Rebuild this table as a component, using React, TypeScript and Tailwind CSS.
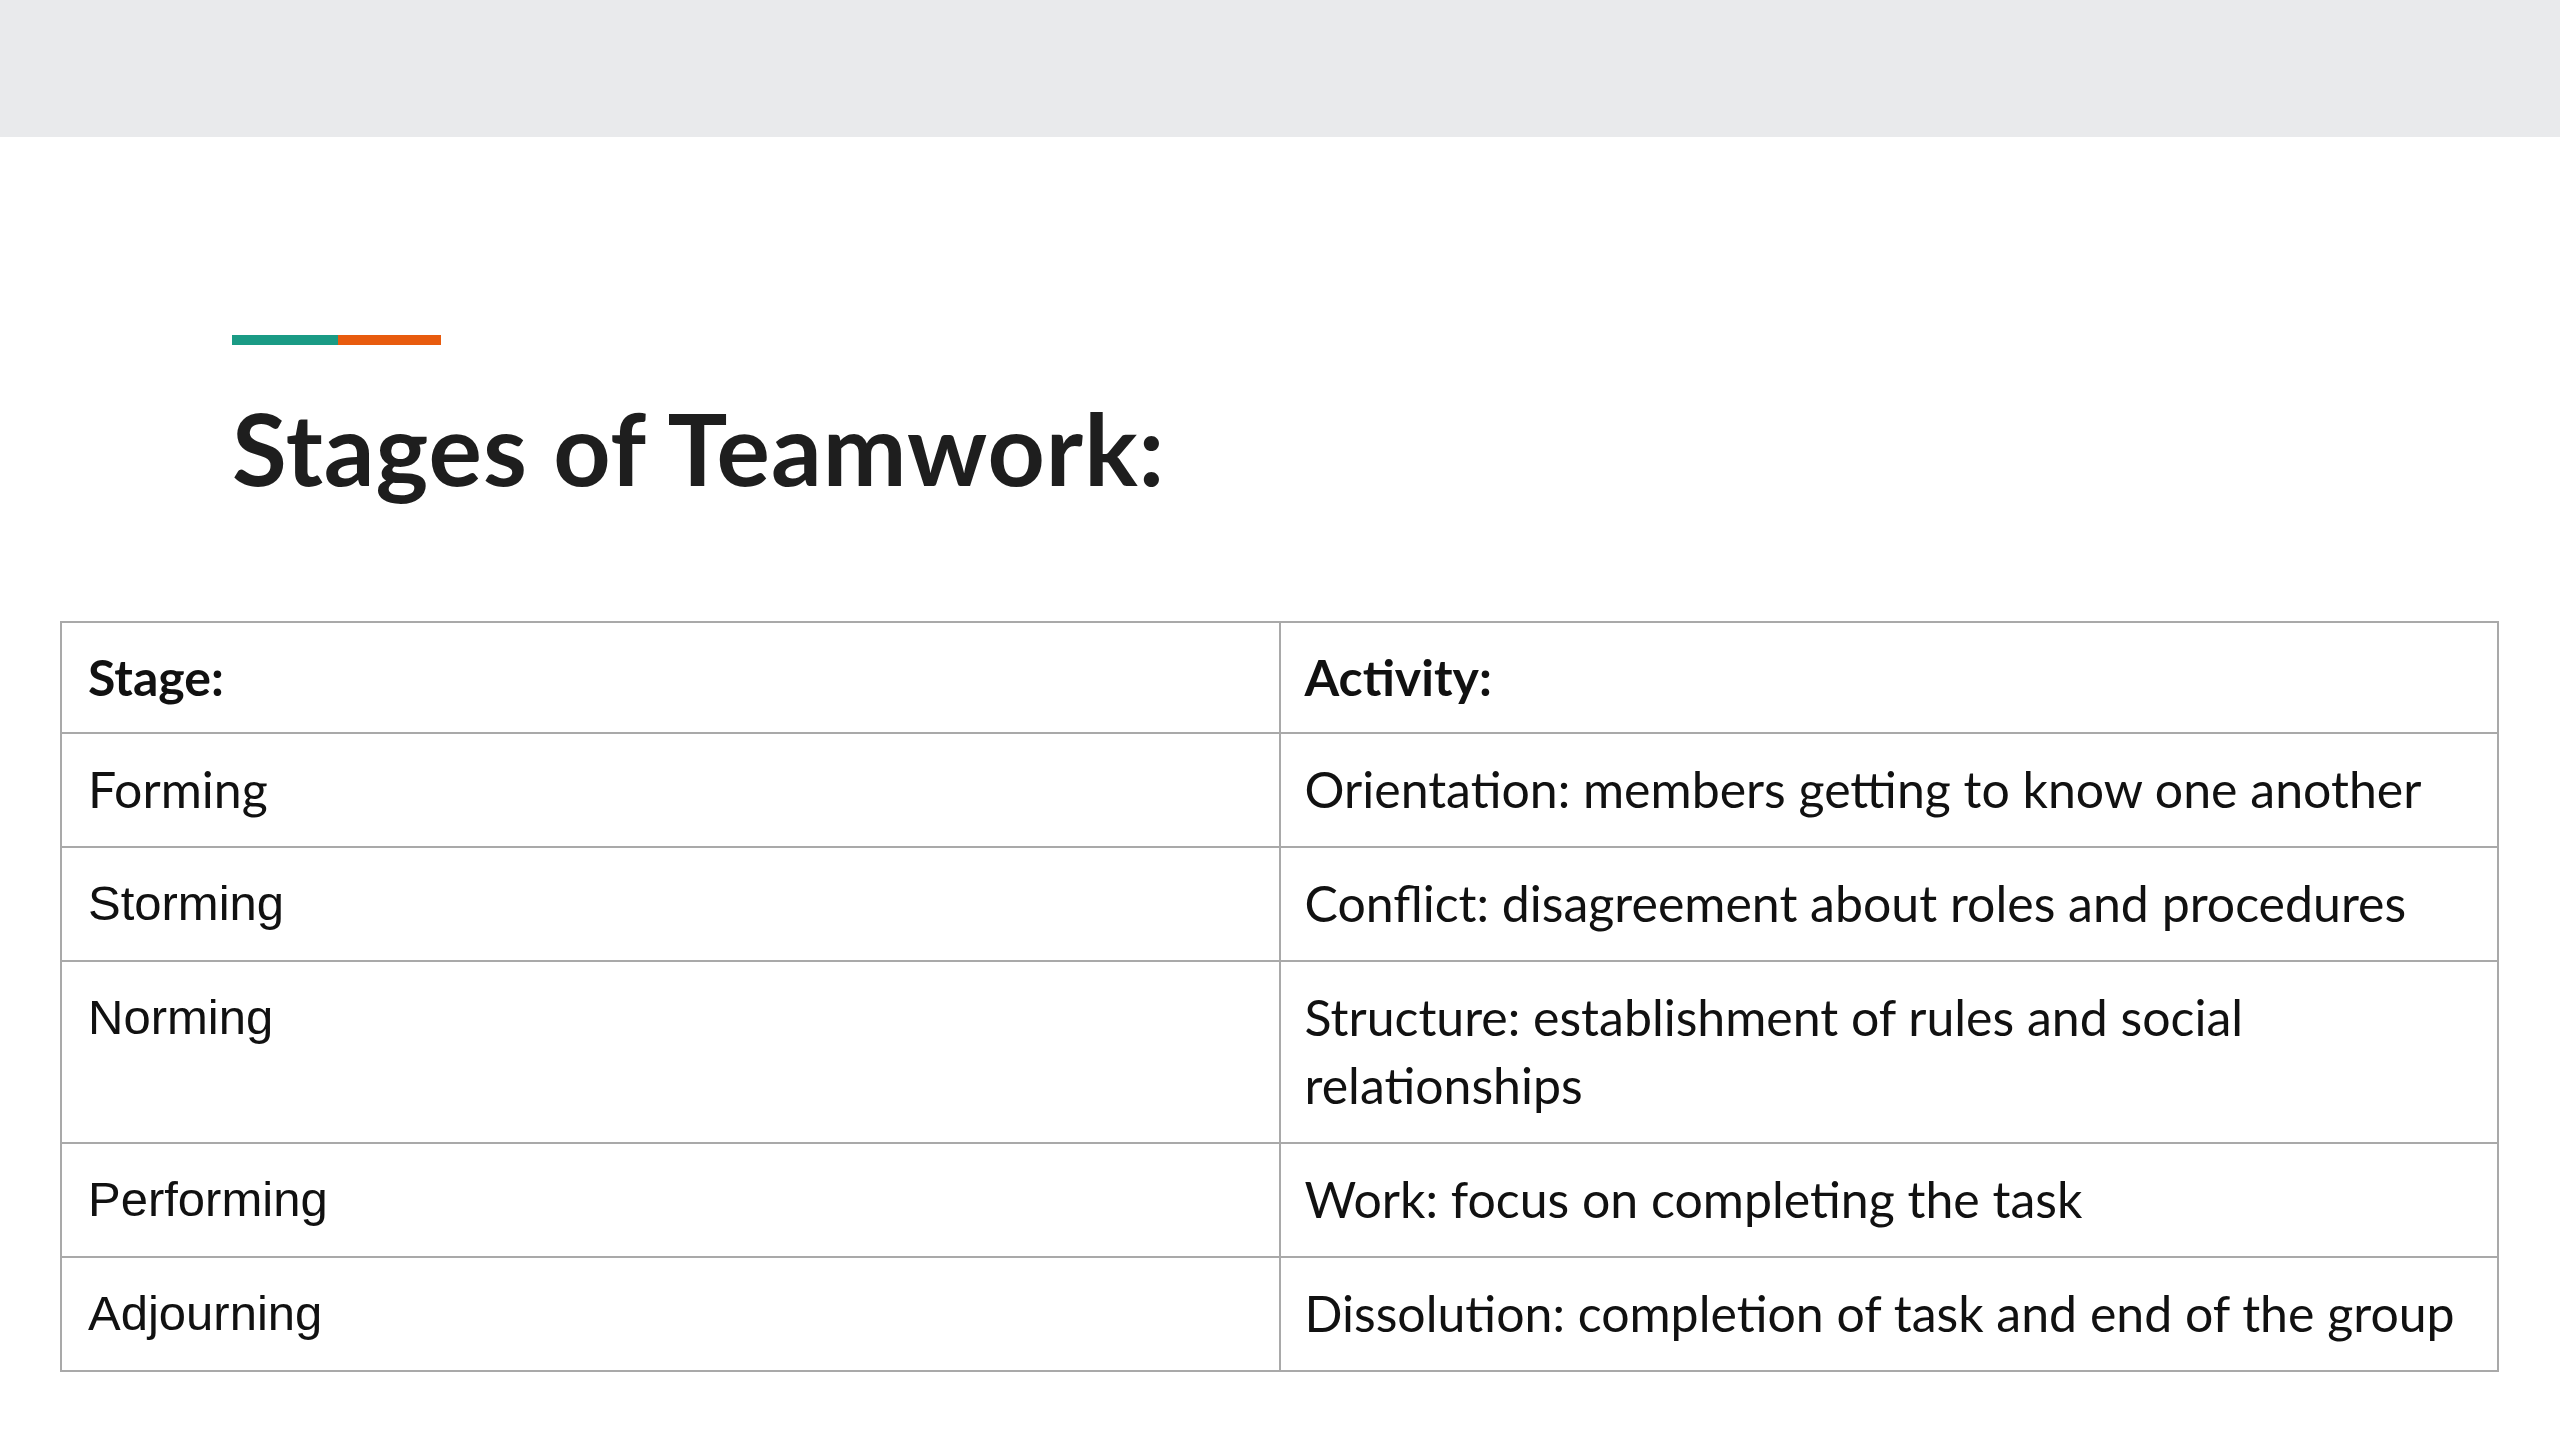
const rows = [
  { stage: "Forming", activity: "Orientation: members getting to know one another", lato: true },
  { stage: "Storming", activity: "Conflict: disagreement about roles and procedures", lato: false },
  { stage: "Norming", activity: "Structure: establishment of rules and social relationships", lato: false },
  { stage: "Performing", activity: "Work: focus on completing the task", lato: false },
  { stage: "Adjourning", activity: "Dissolution: completion of task and end of the group", lato: false },
];

export default function App() {
  return (
    <div className="w-[2560px] h-[1440px] bg-white overflow-hidden font-['Lato',sans-serif] text-[#111]">
      <div className="h-[137px] bg-[#e9eaec]" />

      <div className="pl-[232px] pt-[198px]">
        <div className="flex h-[10px] w-[209px]">
          <div className="w-[106px] bg-[#1a9b85]" />
          <div className="flex-1 bg-[#e85b0e]" />
        </div>
        <h1 className="mt-[42px] text-[100px] leading-[120px] font-bold tracking-[1px] text-[#1e1e1e]">
          Stages of Teamwork:
        </h1>
      </div>

      <table className="ml-[60px] mt-[114px] w-[2439px] table-fixed border-collapse text-[50px] leading-[68px]">
        <thead>
          <tr>
            <th className="w-1/2 border-2 border-[#a9a9a9] px-[26px] pt-[20px] pb-[21px] text-left font-bold">Stage:</th>
            <th className="w-1/2 border-2 border-[#a9a9a9] px-[24px] pt-[20px] pb-[21px] text-left font-bold">Activity:</th>
          </tr>
        </thead>
        <tbody>
          {rows.map((row) => (
            <tr key={row.stage}>
              <td
                className={
                  row.lato
                    ? "border-2 border-[#a9a9a9] px-[26px] pt-[21px] pb-[23px] align-top"
                    : "border-2 border-[#a9a9a9] px-[26px] pt-[21px] pb-[23px] align-top text-[49px] font-['Liberation_Sans',sans-serif]"
                }
              >
                {row.stage}
              </td>
              <td className="border-2 border-[#a9a9a9] px-[24px] pt-[21px] pb-[23px] align-top">
                {row.activity}
              </td>
            </tr>
          ))}
        </tbody>
      </table>
    </div>
  );
}
